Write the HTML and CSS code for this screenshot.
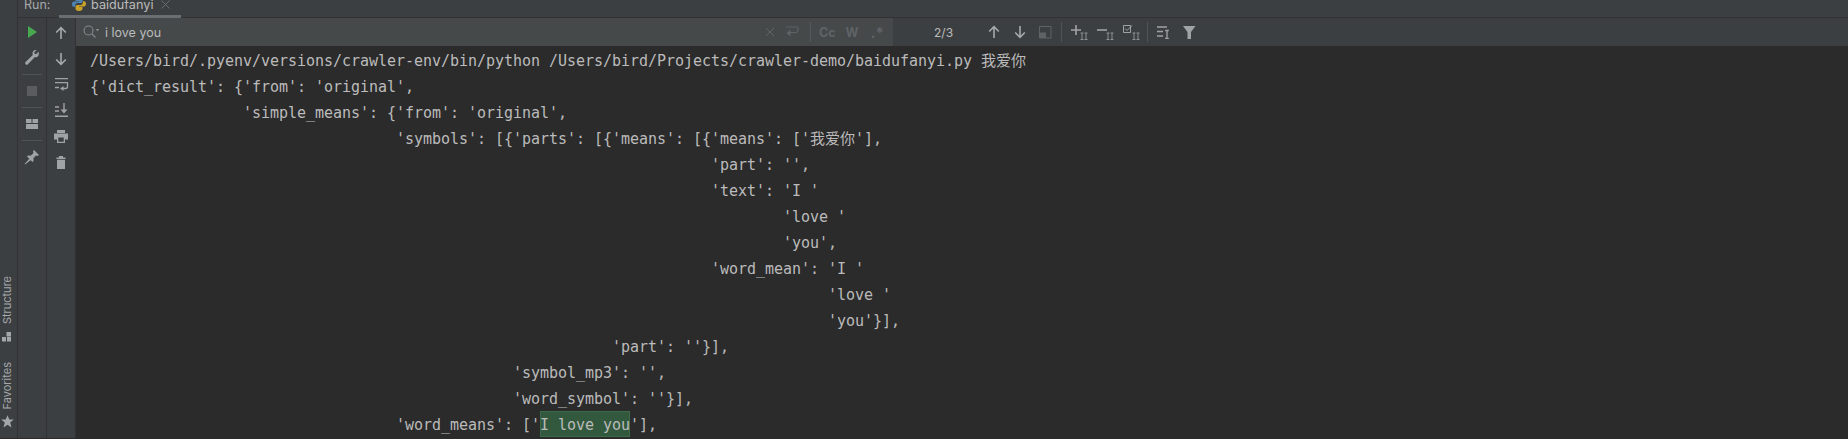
FILE: index.html
```html
<!DOCTYPE html>
<html lang="en">
<head>
<meta charset="utf-8">
<title>Run: baidufanyi</title>
<link rel="stylesheet" href="styles.css">
</head>
<body>
<div class="ide">
  <aside class="stripe">
    <div class="stripe-item item-structure">
      <span class="stripe-label">Structure</span>
      <svg class="stripe-icon" width="10" height="10" viewBox="0 0 10 10"><path d="M4.500 0H9v4.500H4.500zM0 5h4v4.500H0zM5 5h4v4.500H5z" fill="#a4a7a9"/></svg>
    </div>
    <div class="stripe-item item-fav">
      <span class="stripe-label">Favorites</span>
      <svg class="stripe-icon" width="13" height="13" viewBox="0 0 13 13"><path d="M6.500.3l1.800 4.200h4.500L9.200 7.400l1.300 5L6.500 9.700l-4 2.700 1.300-5L.2 4.500h4.500z" fill="#a4a7a9"/></svg>
    </div>
  </aside>
  <div class="main">
    <header class="tabbar">
      <span class="run-label">Run:</span>
      <div class="tab">
        <svg class="py" width="14" height="14" viewBox="0 0 14 14"><path d="M7 0C4.500 0 3.500 1 3.500 2.500V4H7v.6H2C.8 4.600 0 5.600 0 7.200c0 1.700.8 2.600 2 2.600h1.200V8.300c0-1.200 1-2.200 2.200-2.200h3.300c1 0 1.800-.8 1.800-1.800V2.500C10.500 1 9.300 0 7 0z" fill="#4f86b5"/><path d="M7 14c2.500 0 3.500-1 3.500-2.500V10H7v-.6h5c1.200 0 2-1 2-2.600 0-1.700-.8-2.600-2-2.600h-1.200v1.500c0 1.200-1 2.200-2.200 2.200H5.300c-1 0-1.800.8-1.800 1.800v1.800C3.500 13 4.700 14 7 14z" fill="#c9a227"/></svg>
        <span class="tab-name">baidufanyi</span>
        <svg class="tab-close" width="9" height="9" viewBox="0 0 9 9"><path d="M.5.5l8 8M8.500.5l-8 8" stroke="#6a6d70" fill="none"/></svg>
      </div>
    </header>
    <div class="body">
      <nav class="col col-run">
        <svg class="ic ic-play" width="16" height="16" viewBox="0 0 16 16"><path d="M4 2v12l9-6z" fill="#47a84f"/></svg>
        <svg class="ic" width="16" height="16" viewBox="0 0 16 16"><path d="M14.500 1.800l-2.500 2.400-1.300-.5-.5-1.300L12.600 0C10.700-.3 8.400 1 8.500 3.600c0 .6.100 1 .3 1.400L1.600 11.900c-.7.700-.7 1.700 0 2.300.7.700 1.600.7 2.300 0l7-7.100c2.500.9 4.800-1.300 3.600-5.300z" fill="#a0a3a5"/></svg>
        <span class="sep"></span>
        <span class="stop"></span>
        <span class="sep"></span>
        <svg class="ic" width="16" height="16" viewBox="0 0 16 16"><path d="M2 3h5.500v4H2zM8.500 3H14v4H8.500zM2 8h12v5H2z" fill="#a0a3a5"/></svg>
        <span class="sep"></span>
        <svg class="ic" width="16" height="16" viewBox="0 0 16 16"><path d="M10 1l5 5-1.500 1-1.500-.5-2.500 2.500 0 3-1 1L3 7.500l1-1h3L9.500 4 9 2.500zM5.500 9.500l1.500 1.500L1 15.500.5 15z" fill="#a0a3a5"/></svg>
      </nav>
      <nav class="col col-tools">
        <svg class="ic" width="16" height="16" viewBox="0 0 16 16"><path d="M8 15V4M3.200 8.500L8 3.700l4.800 4.800" stroke="#a6aaad" stroke-width="1.600" fill="none"/></svg>
        <svg class="ic" width="16" height="16" viewBox="0 0 16 16"><path d="M8 3v11M3.200 9.500L8 14.300l4.800-4.800" stroke="#a6aaad" stroke-width="1.600" fill="none"/></svg>
        <svg class="ic" width="16" height="16" viewBox="0 0 16 16"><path d="M2 2.700h13M2 6.700h13M2 11.500h4M14.500 6.700v3.800a2 2 0 0 1-2 2H9" stroke="#a0a3a5" stroke-width="1.300" fill="none"/><path d="M10.500 10v5L7 12.500z" fill="#a0a3a5"/></svg>
        <svg class="ic" width="16" height="16" viewBox="0 0 16 16"><path d="M2 14.300h13M2 5h4M2 9h4M11 1v8" stroke="#a0a3a5" stroke-width="1.400" fill="none"/><path d="M7.500 7.500h7L11 11.500z" fill="#a0a3a5"/></svg>
        <svg class="ic" width="16" height="16" viewBox="0 0 16 16"><path d="M4 2h8v3H4zM1 5.500h14v6h-3V15H4v-3.500H1zM5.300 9.500v4.200h5.400V9.500z" fill-rule="evenodd" fill="#a0a3a5"/></svg>
        <svg class="ic" width="16" height="16" viewBox="0 0 16 16"><path d="M3.500 3.500h9V5h-9zM6 2h4v1.500H6zM4 5.800h8V15H4z" fill="#a0a3a5"/></svg>
      </nav>
      <div class="panel">
        <div class="findbar">
          <div class="find-input">
            <svg class="search-ic" width="17" height="14" viewBox="0 0 17 14"><circle cx="5.500" cy="5.500" r="4.500" stroke="#868a8c" stroke-width="1.100" fill="none"/><path d="M9 9l3.500 3.500" stroke="#868a8c" stroke-width="1.100"/><path d="M12.500 4h4l-2 2.200z" fill="#868a8c"/></svg>
            <span class="query">i love you</span>
            <svg class="dim-ic close-ic" width="10" height="10" viewBox="0 0 10 10"><path d="M1 1l8 8M9 1L1 9" stroke="#5f6366" fill="none"/></svg>
            <svg class="dim-ic" width="14" height="13" viewBox="0 0 14 13"><path d="M13 1.500v3a2 2 0 0 1-2 2H3M1 1h12" stroke="#5f6366" stroke-width="1.200" fill="none"/><path d="M5.500 3.500v7L1.500 7z" fill="#5f6366"/></svg>
            <span class="divider dim-div"></span>
            <span class="opt">Cc</span>
            <span class="opt opt-w">W</span>
            <span class="opt opt-re">.*</span>
          </div>
          <div class="find-tools">
            <span class="count">2/3</span>
            <svg class="ic2" width="16" height="16" viewBox="0 0 16 16"><path d="M8 14V3M3.200 7.500L8 2.700l4.800 4.800" stroke="#a6aaad" stroke-width="1.600" fill="none"/></svg>
            <svg class="ic2" width="16" height="16" viewBox="0 0 16 16"><path d="M8 2v11M3.200 8.500L8 13.300l4.800-4.800" stroke="#a6aaad" stroke-width="1.600" fill="none"/></svg>
            <svg class="ic2 ic-square" width="13" height="13" viewBox="0 0 13 13"><path d="M.500.500h11.500v11.500H.500z" stroke="#5f6366" fill="none"/><path d="M1 6.500h6V12H1z" fill="#5f6366"/></svg>
            <span class="divider"></span>
            <svg class="ic3" width="17" height="15" viewBox="0 0 17 15"><path d="M5 0v10M0 5h10" stroke="#a0a3a5" stroke-width="1.600" fill="none"/><path d="M9.500 8h3M13.500 8h3M9.500 14.500h3M13.500 14.500h3M11 8v6.500M15 8v6.500" stroke="#a0a3a5" stroke-width=".8" fill="none"/></svg>
            <svg class="ic3" width="17" height="15" viewBox="0 0 17 15"><path d="M0 5h10" stroke="#a0a3a5" stroke-width="1.600" fill="none"/><path d="M9.500 8h3M13.500 8h3M9.500 14.500h3M13.500 14.500h3M11 8v6.500M15 8v6.500" stroke="#a0a3a5" stroke-width=".8" fill="none"/></svg>
            <svg class="ic3 ic-last" width="17" height="15" viewBox="0 0 17 15"><path d="M.500.500h7v7h-7z" stroke="#a0a3a5" fill="none"/><path d="M2 3.500l2 2 5-5" stroke="#a0a3a5" fill="none"/><path d="M9.500 8h3M13.500 8h3M9.500 14.500h3M13.500 14.500h3M11 8v6.500M15 8v6.500" stroke="#a0a3a5" stroke-width=".8" fill="none"/></svg>
            <span class="divider"></span>
            <svg class="ic-text" width="13" height="13" viewBox="0 0 13 13"><path d="M0 1h10M0 5.500h6M0 10h6M10 4.500v8M8.200 4.500h3.600M8.200 12.500h3.600" stroke="#a0a3a5" stroke-width="1.300" fill="none"/></svg>
            <svg class="ic-funnel" width="13" height="13" viewBox="0 0 13 13"><path d="M0 0h12.500L8 6v7H4.500V6z" fill="#a0a3a5"/></svg>
          </div>
        </div>
        <pre class="console"><span class="cl">/Users/bird/.pyenv/versions/crawler-env/bin/python /Users/bird/Projects/crawler-demo/baidufanyi.py 我爱你</span>
<span class="cl">{'dict_result': {'from': 'original',</span>
<span class="cl">                 'simple_means': {'from': 'original',</span>
<span class="cl">                                  'symbols': [{'parts': [{'means': [{'means': ['我爱你'],</span>
<span class="cl">                                                                     'part': '',</span>
<span class="cl">                                                                     'text': 'I '</span>
<span class="cl">                                                                             'love '</span>
<span class="cl">                                                                             'you',</span>
<span class="cl">                                                                     'word_mean': 'I '</span>
<span class="cl">                                                                                  'love '</span>
<span class="cl">                                                                                  'you'}],</span>
<span class="cl">                                                          'part': ''}],</span>
<span class="cl">                                               'symbol_mp3': '',</span>
<span class="cl">                                               'word_symbol': ''}],</span>
<span class="cl">                                  'word_means': ['<mark class="hit">I love you</mark>'],</span></pre>
      </div>
    </div>
  </div>
</div>
</body>
</html>
```
FILE: styles.css
```css
* { box-sizing: border-box; }
html, body { margin: 0; padding: 0; height: 100%; overflow: hidden; background: #2b2b2b; }
.ide { display: flex; width: 1848px; height: 438px; overflow: hidden; font-family: Inter, "Liberation Sans", Arial, sans-serif; color: #bbbbbb; }
.stripe { width: 18px; flex: none; background: #3c3f41; border-right: 1px solid #323232; display: flex; flex-direction: column; justify-content: flex-end; align-items: center; padding: 0 3px 10px 0; }
.stripe-item { display: flex; flex-direction: column; align-items: center; }
.item-structure { margin-bottom: 20px; gap: 7px; }
.item-fav { gap: 6px; }
.stripe-label { writing-mode: vertical-rl; transform: rotate(180deg); font-size: 11px; color: #a4a7a9; line-height: 14px; }
.stripe-icon { display: block; flex: none; }
.main { flex: 1; display: flex; flex-direction: column; min-width: 0; }
.tabbar { height: 18px; flex: none; background: #3c3f41; border-bottom: 1px solid #323232; display: flex; align-items: flex-end; }
.run-label { font-size: 12.500px; color: #a6a8aa; width: 41px; flex: none; padding-left: 6px; line-height: 17px; position: relative; top: -4px; }
.tab { height: 17px; width: 122px; flex: none; border-bottom: 3px solid #6b6e71; margin-bottom: -1px; display: flex; align-items: center; padding-left: 13px; }
.py { margin-top: -8px; flex: none; }
.tab-name { font-size: 12.700px; color: #bbbbbb; margin-left: 5px; line-height: 17px; position: relative; top: -4px; }
.tab-close { margin-left: 7px; margin-top: -8px; flex: none; }
.body { flex: 1; display: flex; min-height: 0; }
.col { width: 29px; flex: none; background: #3c3f41; display: flex; flex-direction: column; align-items: center; border-right: 1px solid #323232; padding-top: 6px; }
.col-tools { gap: 10px; }
.col-run .ic { margin-bottom: 8px; }
.col-run .ic-play { margin-bottom: 10px; }
.ic { display: block; flex: none; }
.sep { width: 20px; height: 1px; background: #505355; flex: none; margin-bottom: 8px; }
.stop { width: 10px; height: 10px; background: #5a5c5e; flex: none; margin: 3px 0 11px; }
.panel { flex: 1; min-width: 0; display: flex; flex-direction: column; }
.findbar { height: 28px; flex: none; display: flex; background: #3c3f41; }
.find-input { width: 817px; flex: none; background: #45494a; display: flex; align-items: center; padding: 0 9px 0 7px; }
.search-ic { flex: none; }
.query { font-size: 12.500px; color: #bbbbbb; margin-left: 5px; flex: 1; }
.dim-ic { flex: none; }
.close-ic { margin-right: 10px; }
.divider { width: 1px; height: 20px; background: #505355; flex: none; }
.dim-div { margin: 0 8px 0 11px; background: #53575a; }
.opt { font-size: 12.500px; font-weight: 700; color: #5f6366; flex: none; }
.opt-w { margin-left: 10px; }
.opt-re { margin-left: 12px; font-size: 15px; }
.find-tools { flex: 1; display: flex; align-items: center; }
.count { font-size: 12px; color: #bbbbbb; margin-left: 41px; width: 52px; flex: none; }
.ic2 { margin-right: 10px; flex: none; }
.ic-square { margin-left: 1px; margin-right: 9px; }
.ic3 { margin-right: 9px; flex: none; }
.ic-last { margin-right: 7px; }
.find-tools .divider { margin-right: 9px; }
.ic-text { flex: none; margin-right: 13px; }
.ic-funnel { flex: none; }
.console { flex: 1; margin: 0; padding: 2px 0 0 14px; background: #2b2b2b; color: #bbbbbb; font-family: "DejaVu Sans Mono", "Liberation Mono", "Noto Sans CJK SC", monospace; font-size: 15px; letter-spacing: -0.030px; line-height: 26px; overflow: hidden; }
.hit { background: #32593d; color: #bbbbbb; padding: 5px 0 3px; box-shadow: inset 0 0 0 1px #3a6a47; }
```
